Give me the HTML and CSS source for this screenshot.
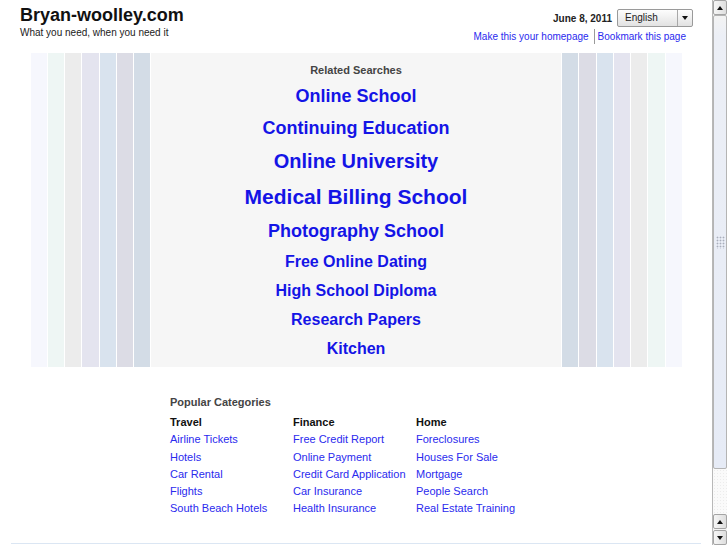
FILE: index.html
```html
<!DOCTYPE html>
<html lang="en">
<head>
<meta charset="utf-8">
<title>Bryan-woolley.com</title>
<link rel="stylesheet" href="styles.css">
</head>
<body>
<div class="window">
  <div class="main">
    <header class="header">
      <div class="brand">
        <div class="title">Bryan-woolley.com</div>
        <div class="tagline">What you need, when you need it</div>
      </div>
      <div class="tools">
        <div class="tools-row">
          <span class="date">June 8, 2011</span>
          <div class="select">
            <span class="select-label">English</span>
            <span class="select-btn"><span class="tri-down"></span></span>
          </div>
        </div>
        <div class="tools-links">
          <a href="#">Make this your homepage</a><span class="sep"></span><a href="#">Bookmark this page</a>
        </div>
      </div>
    </header>

    <section class="showcase">
      <div class="stripes left">
        <i class="c1"></i><i class="c2"></i><i class="c3"></i><i class="c4"></i><i class="c5"></i><i class="c6"></i><i class="c7"></i>
      </div>
      <div class="related">
        <div class="related-title">Related Searches</div>
        <ul class="related-list">
          <li class="s18"><a href="#">Online School</a></li>
          <li class="s18"><a href="#">Continuing Education</a></li>
          <li class="s20"><a href="#">Online University</a></li>
          <li class="s21"><a href="#">Medical Billing School</a></li>
          <li class="s18"><a href="#">Photography School</a></li>
          <li class="s16"><a href="#">Free Online Dating</a></li>
          <li class="s16"><a href="#">High School Diploma</a></li>
          <li class="s16"><a href="#">Research Papers</a></li>
          <li class="s16"><a href="#">Kitchen</a></li>
        </ul>
      </div>
      <div class="stripes right">
        <i class="c7"></i><i class="c6"></i><i class="c5"></i><i class="c4"></i><i class="c3"></i><i class="c2"></i><i class="c1"></i>
      </div>
    </section>

    <section class="popular">
      <div class="popular-title">Popular Categories</div>
      <div class="cat-grid">
        <div class="cat">
          <h3>Travel</h3>
          <a href="#">Airline Tickets</a>
          <a href="#">Hotels</a>
          <a href="#">Car Rental</a>
          <a href="#">Flights</a>
          <a href="#">South Beach Hotels</a>
        </div>
        <div class="cat">
          <h3>Finance</h3>
          <a href="#">Free Credit Report</a>
          <a href="#">Online Payment</a>
          <a href="#">Credit Card Application</a>
          <a href="#">Car Insurance</a>
          <a href="#">Health Insurance</a>
        </div>
        <div class="cat">
          <h3>Home</h3>
          <a href="#">Foreclosures</a>
          <a href="#">Houses For Sale</a>
          <a href="#">Mortgage</a>
          <a href="#">People Search</a>
          <a href="#">Real Estate Training</a>
        </div>
      </div>
    </section>

    <footer class="footer"></footer>
  </div>

  <div class="scrollbar">
    <div class="sb-btn"><span class="tri-up"></span></div>
    <div class="sb-thumb"><span class="grip"></span></div>
    <div class="sb-track"></div>
    <div class="sb-btn"><span class="tri-up"></span></div>
    <div class="sb-btn"><span class="tri-down"></span></div>
  </div>
</div>
</body>
</html>
```

FILE: styles.css
```css
html, body {
  margin: 0;
  padding: 0;
  background: #ffffff;
  overflow: hidden;
}

body {
  font-family: "Liberation Sans", Arial, Helvetica, sans-serif;
  color: #222;
}

.window {
  display: flex;
  width: 727px;
  height: 545px;
  overflow: hidden;
}

.main {
  width: 712px;
  flex: none;
}

/* Header */
.header {
  display: flex;
  justify-content: space-between;
  padding: 0 19px 0 20px;
  height: 53px;
  box-sizing: border-box;
}

.brand {
  padding-top: 5px;
}

.title {
  font-size: 18px;
  font-weight: bold;
  line-height: 20px;
  color: #111;
}

.tagline {
  font-size: 10px;
  line-height: 12px;
  margin-top: 2px;
  color: #222;
}

.tools {
  padding-top: 9px;
  display: flex;
  flex-direction: column;
  align-items: flex-end;
}

.tools-row {
  display: flex;
  align-items: center;
  gap: 5px;
  height: 18px;
}

.date {
  font-size: 10px;
  font-weight: bold;
  color: #222;
}

.select {
  display: flex;
  width: 76px;
  height: 18px;
  box-sizing: border-box;
  border: 1px solid #9a9a9a;
  border-radius: 2px;
  background: linear-gradient(#fdfdfd, #e2e2e2);
}

.select-label {
  flex: 1;
  font-size: 10px;
  line-height: 16px;
  padding-left: 7px;
  color: #222;
}

.select-btn {
  width: 14px;
  border-left: 1px solid #a8a8a8;
  display: flex;
  align-items: center;
  justify-content: center;
}

.tri-down {
  width: 0;
  height: 0;
  border-left: 3.5px solid transparent;
  border-right: 3.5px solid transparent;
  border-top: 4px solid #111;
}

.tri-up {
  width: 0;
  height: 0;
  border-left: 3.5px solid transparent;
  border-right: 3.5px solid transparent;
  border-bottom: 4px solid #111;
}

.tools-links {
  display: flex;
  align-items: center;
  margin-top: 2px;
  padding-right: 7px;
  font-size: 10px;
  line-height: 14px;
}

.tools-links a {
  color: #2a2aee;
  text-decoration: none;
}

.sep {
  width: 1px;
  height: 15px;
  background: #9a9a9a;
  margin: 0 3px 0 5px;
}

/* Showcase */
.showcase {
  display: flex;
  width: 651px;
  height: 314px;
  margin-left: 31px;
}

.stripes {
  display: flex;
  gap: 1px;
}

.stripes.left {
  width: 120px;
  flex: none;
  box-sizing: border-box;
  padding-right: 1px;
}

.stripes.right {
  flex: 1;
  padding-left: 1px;
}

.stripes i {
  display: block;
  flex: 1;
}

.c1 { background: #f6f7fd; }
.c2 { background: #eef6f4; }
.c3 { background: #ececec; }
.c4 { background: #e4e4ef; }
.c5 { background: #d9e3ee; }
.c6 { background: #dcdce5; }
.c7 { background: #d3dce6; }

.related {
  flex: none;
  width: 410px;
  background: #f6f6f6;
  text-align: center;
  padding-top: 10px;
  box-sizing: border-box;
}

.related-title {
  font-size: 11px;
  font-weight: bold;
  line-height: 14px;
  color: #444;
  margin-bottom: 3px;
}

.related-list {
  list-style: none;
  margin: 0;
  padding: 0;
  font-weight: bold;
}

.related-list a {
  color: #1414e6;
  text-decoration: none;
}

.s16 { font-size: 16px; line-height: 29px; }
.s18 { font-size: 18px; line-height: 32px; }
.s20 { font-size: 20px; line-height: 34px; }
.s21 { font-size: 21px; line-height: 37px; }

/* Popular categories */
.popular {
  width: 372px;
  margin: 28px auto 0;
}

.popular-title {
  font-size: 11px;
  font-weight: bold;
  line-height: 14px;
  color: #444;
  margin-bottom: 5px;
}

.cat-grid {
  display: grid;
  grid-template-columns: 123px 123px 1fr;
}

.cat h3 {
  margin: 0;
  font-size: 11px;
  font-weight: bold;
  line-height: 17.3px;
  color: #111;
}

.cat a {
  display: block;
  font-size: 11px;
  line-height: 17.3px;
  color: #2a2aee;
  text-decoration: none;
  white-space: nowrap;
}

.footer {
  margin: 25px 11px 0;
  border-top: 1px solid #dbe6f3;
}

/* Scrollbar */
.scrollbar {
  width: 15px;
  flex: none;
  display: flex;
  flex-direction: column;
  box-sizing: border-box;
  border-left: 1px solid #b8b8b8;
  background: #f4f4f4;
}

.sb-btn {
  height: 15px;
  flex: none;
  box-sizing: border-box;
  border: 1px solid #a4a4a4;
  border-radius: 2px;
  background: linear-gradient(90deg, #f6f6f6, #dedede);
  display: flex;
  align-items: center;
  justify-content: center;
}

.sb-btn + .sb-btn {
  margin-top: 1px;
}

.sb-thumb {
  flex: 1;
  box-sizing: border-box;
  border: 1px solid #b4b4b4;
  border-radius: 2px;
  background: linear-gradient(#f3f3f3 0, #eceff6 20px, #e6ebf6 100%);
  display: flex;
  align-items: center;
  justify-content: center;
}

.grip {
  width: 9px;
  height: 13px;
  background-image: radial-gradient(circle, #a9aebb 0.8px, transparent 1.1px);
  background-size: 3px 3px;
}

.sb-track {
  height: 45px;
  flex: none;
  background-color: #fafafa;
  background-image: radial-gradient(circle, #ececec 0.6px, transparent 0.9px);
  background-size: 3px 3px;
}
```
